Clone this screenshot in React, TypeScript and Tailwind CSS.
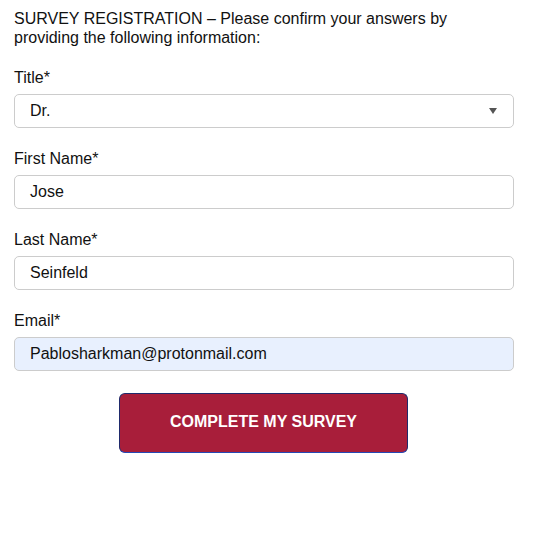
export default function App() {
  const fields = [
    { label: "First Name*", value: "Jose" },
    { label: "Last Name*", value: "Seinfeld" },
  ];

  return (
    <div className="min-h-[542px] bg-white px-[14px] pt-[9px] font-['Liberation_Sans',Arial,sans-serif] text-[16px] leading-[19px] text-[#111]">
      <div className="w-[500px]">
        <p>
          SURVEY REGISTRATION – Please confirm your answers by providing the
          following information:
        </p>

        <div className="mt-[21px]">
          <label className="block">Title*</label>
          <div className="mt-[7px] flex h-[34px] items-center justify-between rounded-[5px] border border-[#cccccc] bg-white pb-[2px] pl-[15px] pr-[16px]">
            <span>Dr.</span>
            <svg width="8" height="6" viewBox="0 0 8 6" className="mt-[1px]">
              <path d="M0 0 H8 L4 6 Z" fill="#555" />
            </svg>
          </div>
        </div>

        {fields.map((f) => (
          <div key={f.label} className="mt-[21px]">
            <label className="block">{f.label}</label>
            <div className="mt-[7px] flex h-[34px] items-center rounded-[5px] border border-[#cccccc] bg-white pb-[2px] pl-[15px]">
              {f.value}
            </div>
          </div>
        ))}

        <div className="mt-[21px]">
          <label className="block">Email*</label>
          <div className="mt-[7px] flex h-[34px] items-center rounded-[5px] border border-[#cccccc] bg-[#e8f0fe] pb-[2px] pl-[15px]">
            Pablosharkman@protonmail.com
          </div>
        </div>

        <div className="mt-[22px] flex">
          <button className="ml-[105px] h-[60px] w-[289px] rounded-[6px] border border-[#1f2a6b] border-b-[#2548b5] bg-[#a81e3a] pb-[3px] font-bold text-white">
            COMPLETE MY SURVEY
          </button>
        </div>
      </div>
    </div>
  );
}
